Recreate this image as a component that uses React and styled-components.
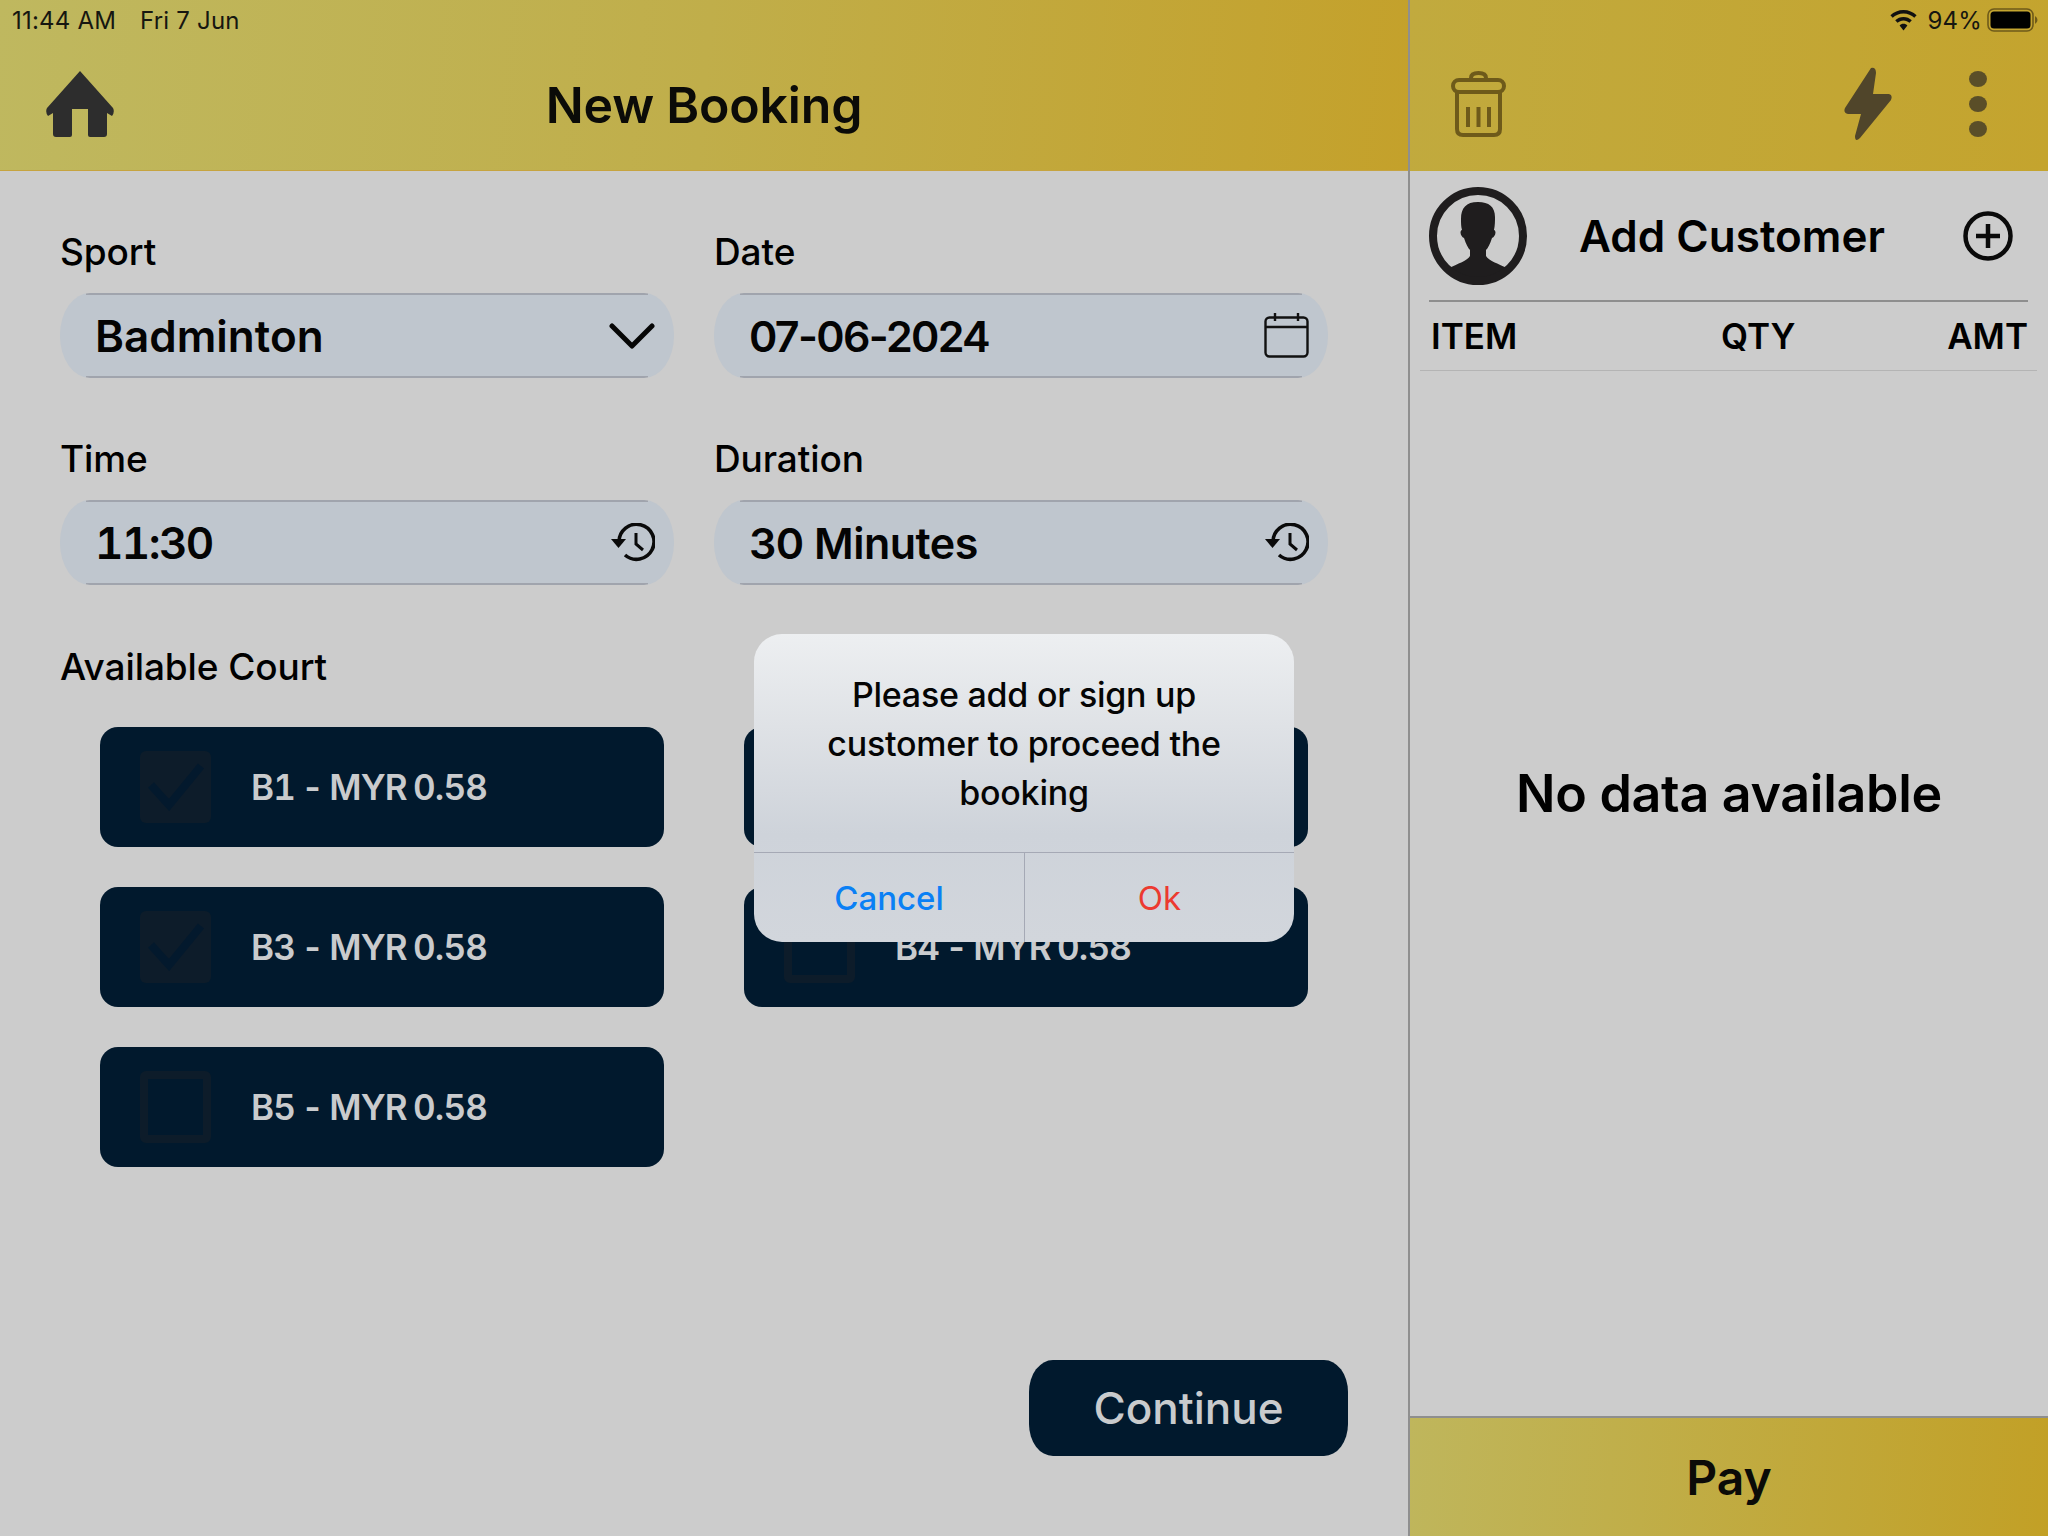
import React from 'react';
import styled, { createGlobalStyle } from 'styled-components';

const GlobalStyle = createGlobalStyle`
  html, body {
    margin: 0;
    padding: 0;
    background: #cccccc;
  }
  * {
    box-sizing: border-box;
  }
  body {
    font-family: Inter, 'Liberation Sans', sans-serif;
    color: #000;
  }
`;

const Page = styled.div`
  position: relative;
  display: flex;
  width: 2048px;
  height: 1536px;
  overflow: hidden;
  background: #cccccc;
`;

const LeftPanel = styled.div`
  display: flex;
  flex-direction: column;
  width: 1408px;
  flex: none;
`;

const RightPanel = styled.div`
  display: flex;
  flex-direction: column;
  flex: 1;
  border-left: 2px solid #8f8f8f;
`;

const LeftHeader = styled.header`
  display: flex;
  flex-direction: column;
  height: 171px;
  flex: none;
  background: linear-gradient(95deg, #bfb85f 0%, #c0ae4a 50%, #c4a12b 100%);
  border-bottom: 1px solid #c6a440;
`;

const RightHeader = styled.header`
  display: flex;
  flex-direction: column;
  height: 171px;
  flex: none;
  background: linear-gradient(95deg, #c1aa3e 0%, #c4a42e 100%);
`;

const StatusRow = styled.div`
  display: flex;
  align-items: center;
  justify-content: ${p => (p.$end ? 'flex-end' : 'flex-start')};
  height: 40px;
  padding: 0 10px 0 12px;
  font-size: 24px;
  letter-spacing: 0.2px;
  color: #161610;
`;

const StatusDate = styled.span`
  margin-left: 24px;
`;

const StatusPercent = styled.span`
  margin: 0 5px 0 10px;
`;

const ToolRow = styled.div`
  position: relative;
  display: flex;
  flex: 1;
  align-items: flex-start;
  justify-content: space-between;
  padding: 31px 46px 0;
`;

const RightTools = styled(ToolRow)`
  padding: 31px 61px 0 41px;
`;

const ToolGroup = styled.div`
  display: flex;
  align-items: center;
  gap: 77px;
  margin-top: -4px;
`;

const Title = styled.h1`
  flex: 1;
  margin: 5px 68px 0 0;
  font-size: 50px;
  font-weight: 600;
  line-height: 58px;
  letter-spacing: -0.2px;
  text-align: center;
  color: #0b0b08;
`;

const Dots = styled.div`
  display: flex;
  flex-direction: column;
  gap: 9px;
`;

const Dot = styled.span`
  width: 18px;
  height: 16px;
  border-radius: 50%;
  background: #5a4e28;
`;

const Form = styled.div`
  display: grid;
  grid-template-columns: 614px 614px;
  column-gap: 40px;
  row-gap: 59px;
  padding: 59px 0 0 60px;
`;

const Field = styled.div`
  display: flex;
  flex-direction: column;
`;

const Label = styled.label`
  height: 63px;
  font-size: 37px;
  font-weight: 500;
  line-height: 44px;
  letter-spacing: -0.1px;
`;

const Pill = styled.div`
  display: flex;
  align-items: center;
  justify-content: space-between;
  height: 85px;
  padding: 0 19px 0 35px;
  border-radius: 30px / 42px;
  background:
    linear-gradient(#a0a4ad, #a0a4ad) top center / 562px 2px no-repeat,
    linear-gradient(#a0a4ad, #a0a4ad) bottom center / 562px 2px no-repeat,
    #bfc6ce;
`;

const PillValue = styled.span`
  font-size: ${p => p.$size}px;
  font-weight: 600;
  letter-spacing: ${p => p.$tracking || 0}px;
  font-feature-settings: ${p => (p.$tabular ? "'tnum'" : 'normal')};
  color: #040404;
`;

const CourtHeading = styled(Label)`
  display: block;
  height: auto;
  margin: 60px 0 38px 60px;
`;

const CourtGrid = styled.div`
  display: grid;
  grid-template-columns: 564px 564px;
  grid-auto-rows: 120px;
  gap: 40px 80px;
  padding-left: 100px;
`;

const Court = styled.div`
  display: flex;
  align-items: center;
  gap: 40px;
  padding-left: 40px;
  border-radius: 18px;
  background: #01192d;
  font-size: 35px;
  font-weight: 600;
  letter-spacing: -0.8px;
  word-spacing: -2.5px;
  font-feature-settings: 'tnum';
  color: #c9cbcd;
`;

const CheckBox = styled.span`
  display: flex;
  align-items: center;
  justify-content: center;
  width: 71px;
  height: 72px;
  flex: none;
  border-radius: 6px;
  border: ${p => (p.$checked ? 'none' : '8px solid #0d1c2a')};
  background: ${p => (p.$checked ? '#0d1c2a' : 'transparent')};
`;

const ActionRow = styled.div`
  display: flex;
  justify-content: flex-end;
  margin-top: auto;
  padding: 0 60px 80px 0;
`;

const ContinueButton = styled.button`
  width: 319px;
  height: 96px;
  border: none;
  border-radius: 24px / 32px;
  background: #01192d;
  font-family: inherit;
  font-size: 44px;
  font-weight: 500;
  color: #c9cbcd;
`;

const CustomerRow = styled.div`
  display: flex;
  align-items: center;
  height: 131px;
  margin: 0 20px 0 19px;
  padding-top: 1px;
  border-bottom: 2px solid #8e8e8e;
`;

const CustomerName = styled.span`
  flex: 1;
  margin-left: 52px;
  font-size: 44px;
  font-weight: 600;
`;

const AddIcon = styled.span`
  display: flex;
  margin-right: 15px;
`;

const TableHead = styled.div`
  display: grid;
  grid-template-columns: 290px auto 1fr;
  align-items: center;
  height: 69px;
  margin: 0 11px 0 10px;
  padding: 0 9px 0 11px;
  border-bottom: 1px solid #b4b4b4;
  font-size: 35px;
  font-weight: 600;
`;

const HeadRight = styled.span`
  text-align: right;
`;

const EmptyState = styled.div`
  display: flex;
  flex: 1;
  align-items: center;
  justify-content: center;
  padding-bottom: 200px;
  font-size: 52px;
  font-weight: 600;
  letter-spacing: -0.3px;
`;

const PayBar = styled.div`
  display: flex;
  align-items: center;
  justify-content: center;
  height: 120px;
  flex: none;
  border-top: 2px solid #8e8e8e;
  background: linear-gradient(95deg, #bfb65c 0%, #c2a026 100%);
  font-size: 48px;
  font-weight: 600;
  color: #0b0b08;
`;

const Dialog = styled.div`
  position: absolute;
  top: 634px;
  left: 754px;
  display: flex;
  flex-direction: column;
  width: 540px;
  height: 308px;
  border-radius: 28px;
  overflow: hidden;
  background: linear-gradient(180deg, #edeff1 0%, #dfe2e6 30%, #ced3da 65%, #d2d6dc 100%);
`;

const DialogText = styled.div`
  height: 219px;
  padding: 36px 20px 0;
  border-bottom: 1px solid #a5a9b5;
  font-size: 34px;
  font-weight: 500;
  line-height: 49px;
  letter-spacing: -0.25px;
  text-align: center;
  color: #050505;
`;

const DialogActions = styled.div`
  display: grid;
  grid-template-columns: 270px 1fr;
  flex: 1;
`;

const DialogButton = styled.button`
  padding: 0;
  border: none;
  border-left: ${p => (p.$danger ? '1px solid #a5a9b5' : 'none')};
  background: transparent;
  font-family: inherit;
  font-size: 33px;
  font-weight: ${p => (p.$danger ? 400 : 500)};
  color: ${p => (p.$danger ? '#ec3a30' : '#0a80f5')};
`;

const HomeIcon = () => (
  <svg width="68" height="66" viewBox="0 0 68 66">
    <path
      fill="#2d2d2d"
      d="M34 0 L67 37 Q69 41 66 45 L61 42 V63 Q61 66 58 66 H44 Q42 66 42 64 V38 H26 V64 Q26 66 24 66 H10 Q7 66 7 63 V42 L2 45 Q-1 41 1 37 Z"
    />
  </svg>
);

const TrashIcon = () => (
  <svg width="55" height="66" viewBox="0 0 55 66" fill="none" stroke="#6e5a1a" strokeWidth="4">
    <path d="M20 9 V7 Q20 2 27.5 2 Q35 2 35 7 V9" />
    <rect x="2" y="9" width="51" height="12" rx="6" />
    <path d="M6 21 V58 Q6 64 12 64 H43 Q49 64 49 58 V21" />
    <path d="M17 36 V56 M27.5 36 V56 M38 36 V56" />
  </svg>
);

const BoltIcon = () => (
  <svg width="48" height="74" viewBox="0 0 48 74">
    <path
      fill="#50452a"
      d="M27 1 Q32 0 32 6 L29 27 L45 27 Q49 28 47 33 L16 71 Q11 76 11 69 L17 47 L4 47 Q-1 46 1 41 Z"
    />
  </svg>
);

const WifiIcon = () => (
  <svg width="27" height="21" viewBox="0 0 27 21">
    <path fill="#111" d="M13.5 0 C8.4 0 3.8 2 0.4 5.2 L2.7 7.7 C5.5 5 9.3 3.4 13.5 3.4 S21.5 5 24.3 7.7 L26.6 5.2 C23.2 2 18.6 0 13.5 0 Z" />
    <path fill="#111" d="M13.5 7 C10.3 7 7.4 8.2 5.2 10.3 L7.5 12.8 C9 11.3 11.2 10.4 13.5 10.4 S18 11.3 19.5 12.8 L21.8 10.3 C19.6 8.2 16.7 7 13.5 7 Z" />
    <path fill="#111" d="M13.5 13.8 C11.9 13.8 10.6 14.4 9.6 15.4 L13.5 20.5 L17.4 15.4 C16.4 14.4 15.1 13.8 13.5 13.8 Z" />
  </svg>
);

const BatteryIcon = () => (
  <svg width="51" height="24" viewBox="0 0 51 24">
    <rect x="1" y="1" width="45" height="22" rx="6" fill="none" stroke="#6e5a1a" strokeWidth="1.6" />
    <rect x="3.5" y="3.5" width="40" height="17" rx="3.5" fill="#000" />
    <path d="M48 8 Q50.5 9.5 50.5 12 Q50.5 14.5 48 16 Z" fill="#6e5a1a" />
  </svg>
);

const ChevronIcon = () => (
  <svg width="46" height="26" viewBox="0 0 46 26" fill="none" stroke="#060606" strokeWidth="5" strokeLinecap="round" strokeLinejoin="round">
    <path d="M3 3 L23 23 L43 3" />
  </svg>
);

const CalendarIcon = () => (
  <svg width="45" height="45" viewBox="0 0 45 45" fill="none" stroke="#111" strokeWidth="2.4">
    <rect x="1.5" y="4.5" width="42" height="39" rx="4" />
    <path d="M1.5 14 H43.5" strokeWidth="2.6" />
    <path d="M11 0 V8 M34 0 V8" />
  </svg>
);

const HistoryIcon = () => (
  <svg width="44" height="40" viewBox="0 0 44 40" fill="none" stroke="#0a0a0a" strokeWidth="3.6">
    <path d="M8 19 A17.5 17.5 0 1 1 14 32" />
    <path d="M0 16 H15 L7.5 25 Z" fill="#0a0a0a" stroke="none" />
    <path d="M25 10 V21 L32 27" strokeWidth="3" />
  </svg>
);

const CheckMark = () => (
  <svg width="58" height="48" viewBox="0 0 58 48" fill="none" stroke="#03192d" strokeWidth="8">
    <path d="M4 22 L22 42 L54 3" />
  </svg>
);

const AvatarIcon = () => (
  <svg width="98" height="98" viewBox="0 0 98 98">
    <defs>
      <clipPath id="avatar-clip">
        <circle cx="49" cy="49" r="46" />
      </clipPath>
    </defs>
    <g clipPath="url(#avatar-clip)" fill="#1f1d1e">
      <path d="M49 15 C37 15 32 21 32 32 C32 36 32 40 33 43 C30 44 32 50 35 51 C37 57 39 61 41 63 V69 C38 74 30 76 18 82 L14 98 H84 L80 82 C68 76 60 74 57 69 V63 C59 61 61 57 63 51 C66 50 68 44 65 43 C66 38 66 34 66 30 C66 20 60 15 49 15 Z" />
    </g>
    <circle cx="49" cy="49" r="45" fill="none" stroke="#1f1d1e" strokeWidth="8" />
  </svg>
);

const PlusCircleIcon = () => (
  <svg width="50" height="50" viewBox="0 0 50 50" fill="none" stroke="#0a0a0a" strokeWidth="4.5">
    <circle cx="25" cy="25" r="22.5" />
    <path d="M13 25 H37 M25 13 V37" />
  </svg>
);

const courts = [
  { name: 'B1 - MYR 0.58', checked: true },
  { name: 'B2 - MYR 0.58', checked: false },
  { name: 'B3 - MYR 0.58', checked: true },
  { name: 'B4 - MYR 0.58', checked: false },
  { name: 'B5 - MYR 0.58', checked: false },
];

const App = () => (
  <Page>
    <GlobalStyle />
    <LeftPanel>
      <LeftHeader>
        <StatusRow>
          <span>11:44 AM</span>
          <StatusDate>Fri 7 Jun</StatusDate>
        </StatusRow>
        <ToolRow>
          <HomeIcon />
          <Title>New Booking</Title>
        </ToolRow>
      </LeftHeader>

      <Form>
        <Field>
          <Label>Sport</Label>
          <Pill>
            <PillValue $size={44}>Badminton</PillValue>
            <ChevronIcon />
          </Pill>
        </Field>
        <Field>
          <Label>Date</Label>
          <Pill>
            <PillValue $size={43} $tracking={-1.7}>07-06-2024</PillValue>
            <CalendarIcon />
          </Pill>
        </Field>
        <Field>
          <Label>Time</Label>
          <Pill>
            <PillValue $size={44} $tabular $tracking={-1.6}>11:30</PillValue>
            <HistoryIcon />
          </Pill>
        </Field>
        <Field>
          <Label>Duration</Label>
          <Pill>
            <PillValue $size={43} $tracking={-0.5}>30 Minutes</PillValue>
            <HistoryIcon />
          </Pill>
        </Field>
      </Form>

      <CourtHeading>Available Court</CourtHeading>
      <CourtGrid>
        {courts.map(court => (
          <Court key={court.name}>
            <CheckBox $checked={court.checked}>
              {court.checked && <CheckMark />}
            </CheckBox>
            {court.name}
          </Court>
        ))}
      </CourtGrid>

      <ActionRow>
        <ContinueButton>Continue</ContinueButton>
      </ActionRow>
    </LeftPanel>

    <RightPanel>
      <RightHeader>
        <StatusRow $end>
          <WifiIcon />
          <StatusPercent>94%</StatusPercent>
          <BatteryIcon />
        </StatusRow>
        <RightTools>
          <TrashIcon />
          <ToolGroup>
            <BoltIcon />
            <Dots>
              <Dot />
              <Dot />
              <Dot />
            </Dots>
          </ToolGroup>
        </RightTools>
      </RightHeader>

      <CustomerRow>
        <AvatarIcon />
        <CustomerName>Add Customer</CustomerName>
        <AddIcon>
          <PlusCircleIcon />
        </AddIcon>
      </CustomerRow>

      <TableHead>
        <span>ITEM</span>
        <span>QTY</span>
        <HeadRight>AMT</HeadRight>
      </TableHead>

      <EmptyState>No data available</EmptyState>

      <PayBar>Pay</PayBar>
    </RightPanel>

    <Dialog>
      <DialogText>
        Please add or sign up<br />
        customer to proceed the<br />
        booking
      </DialogText>
      <DialogActions>
        <DialogButton>Cancel</DialogButton>
        <DialogButton $danger>Ok</DialogButton>
      </DialogActions>
    </Dialog>
  </Page>
);

export default App;
